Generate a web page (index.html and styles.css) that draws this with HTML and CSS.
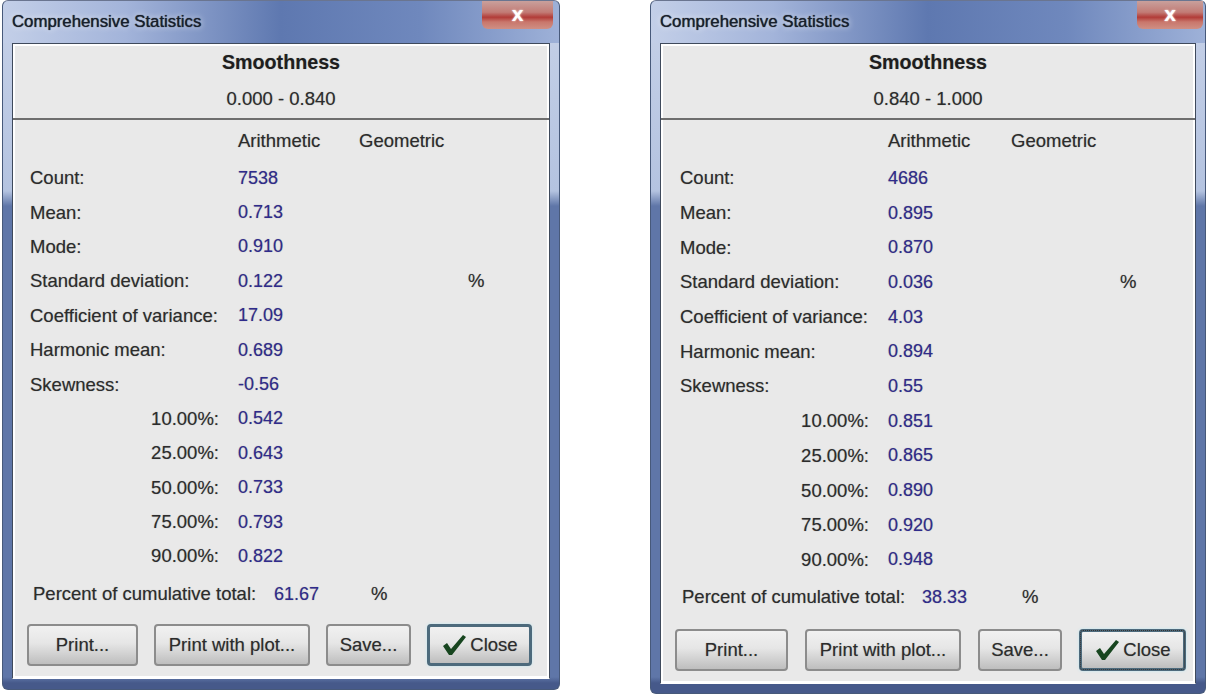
FILE: index.html

```html
<!DOCTYPE html>
<html lang="en">
<head>
  <meta charset="UTF-8">
  <title>Comprehensive Statistics</title>
  <link rel="stylesheet" href="styles.css">
</head>
<body>

<div class="desktop">

  <div class="window window-left">
    <div class="titlebar">
      <span class="title">Comprehensive Statistics</span>
      <span class="close-x">x</span>
    </div>
    <div class="content">
      <div class="head">
        <div class="head-title">Smoothness</div>
        <div class="head-range">0.000 - 0.840</div>
      </div>
      <div class="col-heads"><span class="col-a">Arithmetic</span><span class="col-g">Geometric</span></div>
      <div class="stats">
        <div class="row"><span class="label">Count:</span><span class="value">7538</span></div>
        <div class="row"><span class="label">Mean:</span><span class="value">0.713</span></div>
        <div class="row"><span class="label">Mode:</span><span class="value">0.910</span></div>
        <div class="row"><span class="label">Standard deviation:</span><span class="value">0.122</span><span class="unit">%</span></div>
        <div class="row"><span class="label">Coefficient of variance:</span><span class="value">17.09</span></div>
        <div class="row"><span class="label">Harmonic mean:</span><span class="value">0.689</span></div>
        <div class="row"><span class="label">Skewness:</span><span class="value">-0.56</span></div>
        <div class="row"><span class="label pct">10.00%:</span><span class="value">0.542</span></div>
        <div class="row"><span class="label pct">25.00%:</span><span class="value">0.643</span></div>
        <div class="row"><span class="label pct">50.00%:</span><span class="value">0.733</span></div>
        <div class="row"><span class="label pct">75.00%:</span><span class="value">0.793</span></div>
        <div class="row"><span class="label pct">90.00%:</span><span class="value">0.822</span></div>
      </div>
      <div class="total"><span class="total-label">Percent of cumulative total:</span><span class="value total-value">61.67</span><span class="total-unit">%</span></div>
      <div class="buttons">
        <button class="btn btn-print">Print...</button>
        <button class="btn btn-plot">Print with plot...</button>
        <button class="btn btn-save">Save...</button>
        <button class="btn btn-close">
          <svg class="check" width="26" height="22" viewBox="0 0 26 22"><path d="M2 12 L6 9 L10 15 L22 1 L25 3 L11 21 L8 21 Z" fill="#17451f"/></svg>
          Close
        </button>
      </div>
    </div>
  </div>

  <div class="window window-right">
    <div class="titlebar">
      <span class="title">Comprehensive Statistics</span>
      <span class="close-x">x</span>
    </div>
    <div class="content">
      <div class="head">
        <div class="head-title">Smoothness</div>
        <div class="head-range">0.840 - 1.000</div>
      </div>
      <div class="col-heads"><span class="col-a">Arithmetic</span><span class="col-g">Geometric</span></div>
      <div class="stats">
        <div class="row"><span class="label">Count:</span><span class="value">4686</span></div>
        <div class="row"><span class="label">Mean:</span><span class="value">0.895</span></div>
        <div class="row"><span class="label">Mode:</span><span class="value">0.870</span></div>
        <div class="row"><span class="label">Standard deviation:</span><span class="value">0.036</span><span class="unit">%</span></div>
        <div class="row"><span class="label">Coefficient of variance:</span><span class="value">4.03</span></div>
        <div class="row"><span class="label">Harmonic mean:</span><span class="value">0.894</span></div>
        <div class="row"><span class="label">Skewness:</span><span class="value">0.55</span></div>
        <div class="row"><span class="label pct">10.00%:</span><span class="value">0.851</span></div>
        <div class="row"><span class="label pct">25.00%:</span><span class="value">0.865</span></div>
        <div class="row"><span class="label pct">50.00%:</span><span class="value">0.890</span></div>
        <div class="row"><span class="label pct">75.00%:</span><span class="value">0.920</span></div>
        <div class="row"><span class="label pct">90.00%:</span><span class="value">0.948</span></div>
      </div>
      <div class="total"><span class="total-label">Percent of cumulative total:</span><span class="value total-value">38.33</span><span class="total-unit">%</span></div>
      <div class="buttons">
        <button class="btn btn-print">Print...</button>
        <button class="btn btn-plot">Print with plot...</button>
        <button class="btn btn-save">Save...</button>
        <button class="btn btn-close">
          <svg class="check" width="26" height="22" viewBox="0 0 26 22"><path d="M2 12 L6 9 L10 15 L22 1 L25 3 L11 21 L8 21 Z" fill="#17451f"/></svg>
          Close
        </button>
      </div>
    </div>
  </div>

</div>

</body>
</html>
```

FILE: styles.css

```css
body {
  margin: 0;
  background: #ffffff;
  font-family: "Liberation Sans", Arial, sans-serif;
  font-size: 18.5px;
  color: #2c2c2c;
  text-shadow: 0 0 1px rgba(0,0,0,0.35);
  overflow: hidden;
}
.desktop {
  display: flex;
  align-items: flex-start;
  padding-left: 2px;
  gap: 90px;
}
.window {
  width: 558px;
  height: 690px;
  box-sizing: border-box;
  display: flex;
  flex-direction: column;
  padding: 0 9px 10px;
  border: 1px solid #47597a;
  border-top-color: #6a7590;
  border-radius: 6px;
  background:
    linear-gradient(90deg, #c3cfe8 0%, #a3b4da 22%, #5e78b0 50%, #6f88bd 75%, #9eb1d8 100%) top / 100% 42px no-repeat,
    linear-gradient(#c6d1e8 0, #b4c3e0 190px, #5f76a8 205px, #5f76a8 676px, #46598a 682px);
}
.window-right {
  width: 556px;
  height: 694px;
  padding-bottom: 9px;
}
.titlebar {
  height: 42px;
  flex: none;
  display: flex;
  justify-content: space-between;
  align-items: flex-start;
}
.title {
  margin-top: 11px;
  font-size: 16.8px;
  color: #18202c;
  text-shadow: 0 0 1px #18202c, 0 0 6px #fff;
}
.close-x {
  width: 71px;
  height: 28px;
  margin-right: -3px;
  border-radius: 0 0 6px 6px;
  background: linear-gradient(#c9a09c 0%, #c27c76 40%, #b23c38 58%, #c9776c 75%, #cf8f84 100%);
  color: #fff;
  font-weight: bold;
  font-size: 21px;
  line-height: 26px;
  text-align: center;
  text-shadow: 0 0 2px #fff;
}
.window-right .close-x {
  width: 66px;
  margin-right: -7px;
}
.content {
  flex: 1;
  display: flex;
  flex-direction: column;
  background: #e9e9e9;
  border: 1px solid #3f4a5c;
  border-bottom-color: #fff;
  box-shadow: inset 0 0 0 2px #fff;
}
.head {
  height: 76px;
  flex: none;
  box-sizing: border-box;
  border-bottom: 2px solid #6e6e6e;
  text-align: center;
}
.head-title {
  margin-top: 7px;
  font-size: 19.7px;
  font-weight: bold;
  color: #1e1e1e;
}
.head-range {
  margin-top: 14px;
}
.col-heads {
  height: 41px;
  display: flex;
  align-items: center;
  padding-left: 225px;
}
.window-right .col-heads {
  padding-left: 227px;
}
.col-a {
  width: 121px;
}
.window-right .col-a {
  width: 123px;
}
.stats {
  display: flex;
  flex-direction: column;
}
.row {
  height: 34.4px;
  display: flex;
  align-items: center;
}
.window-right .row {
  height: 34.7px;
}
.label {
  width: 225px;
  flex: none;
  box-sizing: border-box;
  padding-left: 17px;
  white-space: nowrap;
}
.window-right .label {
  width: 227px;
  padding-left: 19px;
}
.label.pct,
.window-right .label.pct {
  padding-left: 0;
  padding-right: 19px;
  text-align: right;
}
.value {
  width: 50px;
  flex: none;
  font-size: 18px;
  color: #2f2b8c;
}
.unit {
  margin-left: 180px;
}
.window-right .unit {
  margin-left: 182px;
}
.total {
  height: 41px;
  display: flex;
  align-items: center;
  padding-left: 20px;
}
.window-right .total {
  height: 40px;
  padding-left: 21px;
}
.total-label {
  width: 241px;
  flex: none;
  white-space: nowrap;
}
.window-right .total-label {
  width: 240px;
}
.total-value {
  width: 97px;
}
.window-right .total-value {
  width: 100px;
}
.buttons {
  display: flex;
  gap: 16px;
  padding: 9px 0 0 14px;
}
.window-right .buttons {
  gap: 17px;
  padding-top: 12px;
}
.btn {
  height: 42px;
  box-sizing: border-box;
  border: 2px solid #8c8c8c;
  border-radius: 4px;
  background: linear-gradient(#f1f1f1 0%, #e6e6e6 45%, #bebebe 100%);
  font-family: inherit;
  font-size: 18.5px;
  color: #2c2c2c;
  text-shadow: 0 0 1px rgba(0,0,0,0.35);
  padding: 0;
}
.btn-print {
  width: 111px;
}
.window-right .btn-print {
  width: 113px;
}
.btn-plot {
  width: 156px;
}
.btn-save {
  width: 85px;
}
.window-right .btn-save {
  width: 84px;
}
.btn-close {
  width: 105px;
  border: 3px solid #4d6a7c;
  box-shadow: 0 0 3px #bfe6f0;
  display: flex;
  align-items: center;
  justify-content: center;
  gap: 3px;
}
.window-right .btn-close {
  width: 107px;
  outline: 1px dotted #333;
  outline-offset: -2px;
}
.check {
  flex: none;
}
```
